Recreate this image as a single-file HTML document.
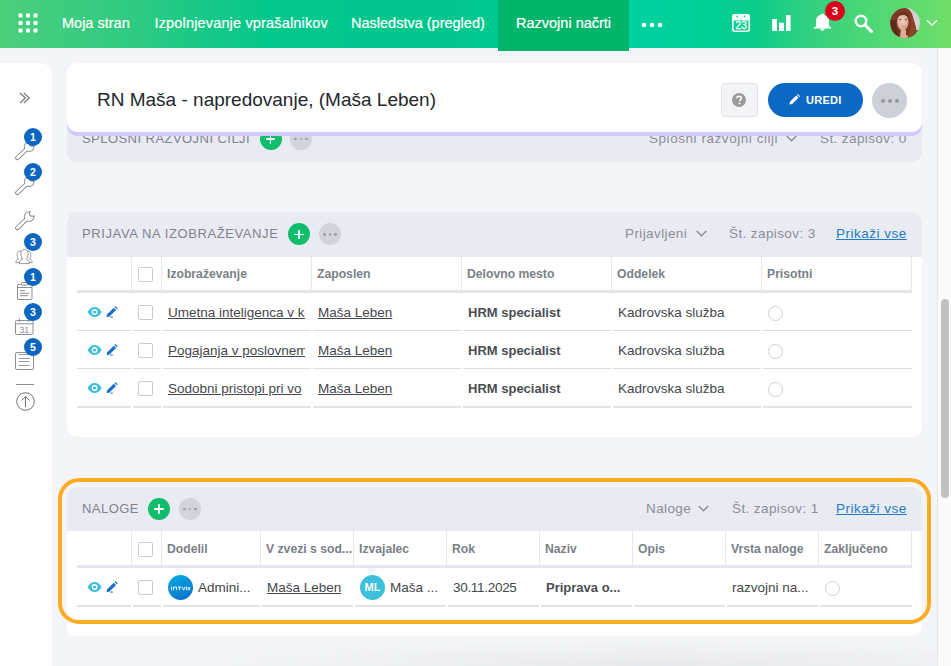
<!DOCTYPE html>
<html><head><meta charset="utf-8">
<style>
*{box-sizing:border-box;margin:0;padding:0}
html,body{width:951px;height:666px;overflow:hidden}
body{background:#f4f5f9;font-family:"Liberation Sans",sans-serif;position:relative;color:#3a3d42}
.abs{position:absolute}
#hdr{left:0;top:0;width:951px;height:48px;background:linear-gradient(90deg,#4ccf7c 0%,#2cca83 15%,#00c78c 29%,#00c68f 50%,#00cd9a 62%,#02d2a0 67%,#00cf95 75%,#10cc8a 80%,#3ad27c 86.5%,#6fdf69 100%)}
.nav{position:absolute;top:14px;color:#fff;font-size:14.5px;white-space:nowrap;line-height:18px;-webkit-text-stroke:0.2px #fff}
#tab{left:498px;top:0;width:131px;height:51px;background:#03b46b}
#side{left:0;top:63px;width:52px;height:620px;background:#fff;border-top-right-radius:12px}
#sb{left:937px;top:48px;width:14px;height:618px;background:#fafafa;border-left:1px solid #e6e6e6}
#thumb{left:941px;top:299px;width:8px;height:199px;background:#c1c1c1;border-radius:4px}
.card{position:absolute;background:#fff;border-radius:10px;overflow:hidden}
.shdr{position:absolute;left:0;top:0;right:0;height:45px;background:#e9ebf3}
.stitle{position:absolute;left:15px;color:#80848c;font-size:13px;letter-spacing:0.45px;white-space:nowrap}
.plus{position:absolute;width:22px;height:22px;border-radius:50%;background:#12bc6d}
.plus:before,.plus:after{content:"";position:absolute;background:#fff;left:50%;top:50%;border-radius:1px}
.plus:before{width:9.5px;height:1.8px;margin:-0.9px 0 0 -4.75px}
.plus:after{width:1.8px;height:9.5px;margin:-4.75px 0 0 -0.9px}
.more{position:absolute;width:22px;height:22px;border-radius:50%;background:#d2d4da}
.more i{position:absolute;top:9.6px;width:2.8px;height:2.8px;border-radius:50%;background:#999ca3}
.rt{position:absolute;color:#8a8e96;font-size:13.5px;letter-spacing:0.4px;white-space:nowrap}
.lnk{position:absolute;color:#1e7bc7;font-size:13.5px;letter-spacing:0.5px;text-decoration:underline;white-space:nowrap}
.th{position:absolute;color:#7b7f87;font-weight:bold;font-size:12.2px;white-space:nowrap}
.vl{position:absolute;width:1px;background:#e7e8ec}
.hl{position:absolute;height:1px;background:#dcdde2}
.cb{position:absolute;width:15px;height:15px;border:1px solid #c9cbd1;border-radius:2px;background:#fff}
.td{position:absolute;font-size:13.5px;color:#44474d;white-space:nowrap}
.u{text-decoration:underline}
.b{font-weight:bold;font-size:13px;color:#4a4d53}
.radio{position:absolute;width:16px;height:16px;border:1px solid #cfd1d5;border-radius:50%}
.badge{position:absolute;left:24px;width:18px;height:18px;border-radius:50%;background:#0b66c2;color:#fff;font-size:10.5px;font-weight:bold;text-align:center;line-height:18px}
</style></head><body>

<div id="hdr" class="abs"></div>
<div id="tab" class="abs"></div>
<!-- grid icon -->
<svg class="abs" style="left:18px;top:13px" width="20" height="20" viewBox="0 0 20 20">
<g fill="#fff">
<rect x="0.5" y="0.5" width="4" height="4" rx="1"/><rect x="8" y="0.5" width="4" height="4" rx="1"/><rect x="15.5" y="0.5" width="4" height="4" rx="1"/>
<rect x="0.5" y="8" width="4" height="4" rx="1"/><rect x="8" y="8" width="4" height="4" rx="1"/><rect x="15.5" y="8" width="4" height="4" rx="1"/>
<rect x="0.5" y="15.5" width="4" height="4" rx="1"/><rect x="8" y="15.5" width="4" height="4" rx="1"/><rect x="15.5" y="15.5" width="4" height="4" rx="1"/>
</g></svg>
<div class="nav" style="left:62px">Moja stran</div>
<div class="nav" style="left:154.5px;letter-spacing:0.16px">Izpolnjevanje vprašalnikov</div>
<div class="nav" style="left:351px">Nasledstva (pregled)</div>
<div class="nav" style="left:516px">Razvojni načrti</div>
<svg class="abs" style="left:641px;top:22.3px" width="22" height="6" viewBox="0 0 22 6"><g fill="#fff"><circle cx="3" cy="3" r="2.3"/><circle cx="11" cy="3" r="2.3"/><circle cx="19" cy="3" r="2.3"/></g></svg>


<!-- header right icons -->
<svg class="abs" style="left:731.5px;top:14px" width="18" height="18" viewBox="0 0 18 18">
<rect x="0.8" y="0.8" width="16.4" height="16.4" rx="1.6" fill="none" stroke="#fff" stroke-width="1.6"/>
<rect x="0.8" y="0.8" width="16.4" height="5.6" rx="1" fill="#fff"/>
<circle cx="5.3" cy="2.3" r="0.9" fill="#05cd92"/><circle cx="12.6" cy="2.3" r="0.9" fill="#05cd92"/>
<text x="9" y="14.7" font-family="Liberation Sans" font-size="10.5" fill="#fff" stroke="#fff" stroke-width="0.25" text-anchor="middle">23</text>
</svg>
<svg class="abs" style="left:772px;top:15px" width="19" height="16" viewBox="0 0 19 16">
<g fill="#fff"><rect x="0.2" y="4" width="4.8" height="12"/><rect x="7" y="7.7" width="5" height="8.3"/><rect x="14" y="0" width="4.6" height="16"/></g>
</svg>
<svg class="abs" style="left:814px;top:13px" width="18" height="19" viewBox="0 0 18 19">
<circle cx="8.5" cy="1.9" r="1.3" fill="#fff"/>
<path d="M8.5 1.6C5 1.6 2.2 4 2.1 7.6L1.9 14H15.1L14.9 7.6C14.8 4 12 1.6 8.5 1.6z" fill="#fff"/>
<rect x="0" y="13.8" width="17" height="1.7" rx="0.5" fill="#fff"/>
<path d="M6.2 15.4a2.3 2.3 0 0 0 4.6 0z" fill="#fff"/>
</svg>
<div class="abs" style="left:825px;top:1px;width:20px;height:20px;border-radius:50%;background:#d8041b;color:#fff;font-weight:bold;font-size:11.5px;text-align:center;line-height:20px">3</div>
<svg class="abs" style="left:854px;top:14px" width="19" height="19" viewBox="0 0 19 19">
<circle cx="7" cy="7" r="5.3" fill="none" stroke="#fff" stroke-width="2.4"/>
<line x1="10.8" y1="10.8" x2="17.5" y2="17.5" stroke="#fff" stroke-width="3" stroke-linecap="round"/>
</svg>
<svg class="abs" style="left:890px;top:8px" width="30" height="30" viewBox="0 0 30 30">
<defs><clipPath id="av"><circle cx="15" cy="15" r="14.9"/></clipPath>
<radialGradient id="skin" cx="0.45" cy="0.4" r="0.6"><stop offset="0" stop-color="#f0cfc2"/><stop offset="1" stop-color="#d9a592"/></radialGradient></defs>
<g clip-path="url(#av)">
<rect width="30" height="30" fill="#d6d2d4"/>
<rect x="0" y="22" width="30" height="8" fill="#8a4a30"/>
<path d="M-1 30V8C1 2 6 -1 13 -0.5C19 0 22 4 23 9C24 14 27 19 26 24C25 27 24 29 23 30z" fill="#7b3a22"/>
<path d="M0 12C1 20 3 26 6 30H10C7 25 6 18 6 12z" fill="#5e2a17"/>
<path d="M17 5C22 9 22 16 20 22C19 26 18 28 17 30H23C25 26 26 20 24 14C23 9 21 6 17 5z" fill="#8b4527"/>
<ellipse cx="12.8" cy="14.2" rx="5.6" ry="8.3" fill="url(#skin)"/>
<path d="M7 10C8 5 11 3.5 15 4C18 4.5 19.5 7 19 10C17 7 13 6 9 8z" fill="#6e321d"/>
<path d="M11 22h5v8h-6z" fill="#dcae9e"/>
<path d="M10 28C12 26 16 26 18 28V30H9z" fill="#e6a7a6"/>
<ellipse cx="10.3" cy="11.6" rx="1.3" ry="0.7" fill="#5d4744"/><ellipse cx="16" cy="11.6" rx="1.2" ry="0.7" fill="#5d4744"/>
<ellipse cx="13.8" cy="18.4" rx="2.2" ry="0.9" fill="#df8f8d"/>
</g></svg>
<svg class="abs" style="left:926px;top:19px" width="12" height="8" viewBox="0 0 12 8"><path d="M1 1.2L6 6.2L11 1.2" fill="none" stroke="#fff" stroke-width="1.3"/></svg>

<div id="side" class="abs"></div>

<svg class="abs" style="left:19px;top:92px" width="12" height="12" viewBox="0 0 12 12"><path d="M1 0.9L6.3 5.9L1 10.9M4.9 0.9L10.2 5.9L4.9 10.9" fill="none" stroke="#80838b" stroke-width="1.4"/></svg>
<svg class="abs" style="left:14px;top:141px" width="21" height="20" viewBox="0 0 21 20"><defs><clipPath id="wc1"><circle cx="15.2" cy="5.6" r="5.3"/></clipPath><mask id="wm1" maskUnits="userSpaceOnUse" x="0" y="0" width="21" height="20"><rect width="21" height="20" fill="#fff"/><circle cx="18.4" cy="2.4" r="2.4" fill="#000"/></mask></defs><g mask="url(#wm1)"><circle cx="15.2" cy="5.6" r="5.3" fill="#8b8e94"/><line x1="15.2" y1="5.6" x2="3.4" y2="16.8" stroke="#8b8e94" stroke-width="4.6" stroke-linecap="round"/><circle cx="15.2" cy="5.6" r="4.3" fill="#fff"/><line x1="15.2" y1="5.6" x2="3.4" y2="16.8" stroke="#fff" stroke-width="2.6" stroke-linecap="round"/><g clip-path="url(#wc1)"><circle cx="18.4" cy="2.4" r="3.4" fill="#8b8e94"/></g></g></svg><div class="badge" style="top:128px">1</div><svg class="abs" style="left:14px;top:176px" width="21" height="20" viewBox="0 0 21 20"><defs><clipPath id="wc2"><circle cx="15.2" cy="5.6" r="5.3"/></clipPath><mask id="wm2" maskUnits="userSpaceOnUse" x="0" y="0" width="21" height="20"><rect width="21" height="20" fill="#fff"/><circle cx="18.4" cy="2.4" r="2.4" fill="#000"/></mask></defs><g mask="url(#wm2)"><circle cx="15.2" cy="5.6" r="5.3" fill="#8b8e94"/><line x1="15.2" y1="5.6" x2="3.4" y2="16.8" stroke="#8b8e94" stroke-width="4.6" stroke-linecap="round"/><circle cx="15.2" cy="5.6" r="4.3" fill="#fff"/><line x1="15.2" y1="5.6" x2="3.4" y2="16.8" stroke="#fff" stroke-width="2.6" stroke-linecap="round"/><g clip-path="url(#wc2)"><circle cx="18.4" cy="2.4" r="3.4" fill="#8b8e94"/></g></g></svg><div class="badge" style="top:163px">2</div><svg class="abs" style="left:14px;top:211px" width="21" height="20" viewBox="0 0 21 20"><defs><clipPath id="wc3"><circle cx="15.2" cy="5.6" r="5.3"/></clipPath><mask id="wm3" maskUnits="userSpaceOnUse" x="0" y="0" width="21" height="20"><rect width="21" height="20" fill="#fff"/><circle cx="18.4" cy="2.4" r="2.4" fill="#000"/></mask></defs><g mask="url(#wm3)"><circle cx="15.2" cy="5.6" r="5.3" fill="#8b8e94"/><line x1="15.2" y1="5.6" x2="3.4" y2="16.8" stroke="#8b8e94" stroke-width="4.6" stroke-linecap="round"/><circle cx="15.2" cy="5.6" r="4.3" fill="#fff"/><line x1="15.2" y1="5.6" x2="3.4" y2="16.8" stroke="#fff" stroke-width="2.6" stroke-linecap="round"/><g clip-path="url(#wc3)"><circle cx="18.4" cy="2.4" r="3.4" fill="#8b8e94"/></g></g></svg>
<svg class="abs" style="left:15px;top:248px" width="19" height="17" viewBox="0 0 19 17"><g fill="#fff" stroke="#8b8e94" stroke-width="0.9" stroke-linejoin="round"><path d="M0.8 14.6c0-2 0.9-2.8 2.6-3.5 0-1-1.3-2-1.3-4.3 0-2.3 1.2-3.8 3-3.8s3 1.5 3 3.8c0 2.3-1.3 3.3-1.3 4.3 1.7.7 2.6 1.5 2.6 3.5z"/><path d="M8.6 14.6c0-2 0.9-2.8 2.6-3.5 0-1-1.3-2-1.3-4.3 0-2.3 1.2-3.8 3-3.8s3 1.5 3 3.8c0 2.3-1.3 3.3-1.3 4.3 1.7.7 2.6 1.5 2.6 3.5z"/><path d="M4.4 15.6c0-2.4 1.1-3.4 3-4.2 0-1.2-1.5-2.5-1.5-5.3 0-2.8 1.4-4.6 3.6-4.6s3.6 1.8 3.6 4.6c0 2.8-1.5 4.1-1.5 5.3 1.9.8 3 1.8 3 4.2z"/></g></svg>
<div class="badge" style="top:233px">3</div>
<svg class="abs" style="left:17px;top:282px" width="16" height="18" viewBox="0 0 16 18"><g fill="none" stroke="#8b8e94" stroke-width="1"><rect x="0.5" y="2.5" width="14.5" height="15" rx="0.6" fill="#fff"/><rect x="4.5" y="0.5" width="6" height="2.5" rx="0.5" fill="#fff"/><path d="M0.5 5.5h14.5M3 8.8h5M3 11.3h9M3 13.7h8"/></g></svg>
<div class="badge" style="top:268px">1</div>
<svg class="abs" style="left:15px;top:318px" width="19" height="17" viewBox="0 0 19 17"><g fill="none" stroke="#8b8e94" stroke-width="1"><rect x="0.5" y="2.5" width="17.5" height="14" rx="1.2" fill="#fff"/><path d="M0.5 5.8h17.5M4.5 0.5v3.5M13.5 0.5v3.5"/></g><text x="9.3" y="14.6" font-family="Liberation Sans" font-size="8.5" fill="#8b8e94" text-anchor="middle">31</text></svg>
<div class="badge" style="top:303px">3</div>
<svg class="abs" style="left:15px;top:352px" width="19" height="18" viewBox="0 0 19 18"><g fill="none" stroke="#8b8e94" stroke-width="1"><rect x="0.5" y="0.5" width="18" height="17" rx="1.5" fill="#fff"/><path d="M3.7 2.5h11M3.7 6.5h11M3.7 9.5h11M3.7 13.5h11" stroke-width="0.9"/></g></svg>
<div class="badge" style="top:338px">5</div>
<div class="abs" style="left:16px;top:384px;width:18px;height:1px;background:#8b8e94"></div>
<svg class="abs" style="left:16px;top:392px" width="19" height="19" viewBox="0 0 19 19"><circle cx="9.5" cy="9.5" r="8.8" fill="none" stroke="#6f7278" stroke-width="1"/><path d="M9.5 15V4.5M5.5 8.5l4-4 4 4" fill="none" stroke="#6f7278" stroke-width="1"/></svg>

<!--MAIN-->
<div class="card" style="left:67px;top:116px;width:855px;height:46px;background:#e9ebf3;border-radius:10px"></div>
<div class="stitle" style="left:82px;top:132px;line-height:14px">SPLOSNI RAZVOJNI CILJI</div>
<div class="plus" style="left:259.5px;top:128px"></div>
<div class="more" style="left:290px;top:128px"><i style="left:4.3px"></i><i style="left:9.6px"></i><i style="left:14.9px"></i></div>
<div class="rt" style="left:649px;top:132px;line-height:14px;letter-spacing:0.55px">Splosni razvojni cilji</div>
<svg class="abs" style="left:786px;top:135px" width="11" height="7" viewBox="0 0 11 7"><path d="M0.7 0.9L5.5 5.7L10.3 0.9" fill="none" stroke="#8a8e96" stroke-width="1.4"/></svg>
<div class="rt" style="left:820px;top:132px;line-height:14px">Št. zapisov: 0</div>
<div class="card" style="left:67px;top:212px;width:855px;height:225px;border-radius:11px"></div>
<div class="abs" style="left:67px;top:212px;width:855px;height:45px;background:#e9ebf3;border-radius:10px 10px 0 0"></div>
<div class="stitle" style="left:82px;top:227px;line-height:14px;letter-spacing:0.6px">PRIJAVA NA IZOBRAŽEVANJE</div>
<div class="plus" style="left:288px;top:223.4px"></div>
<div class="more" style="left:319px;top:223.4px"><i style="left:4.3px"></i><i style="left:9.6px"></i><i style="left:14.9px"></i></div>
<div class="rt" style="left:625px;top:227px;line-height:14px">Prijavljeni</div>
<svg class="abs" style="left:696px;top:230px" width="11" height="7" viewBox="0 0 11 7"><path d="M0.7 0.9L5.5 5.7L10.3 0.9" fill="none" stroke="#8a8e96" stroke-width="1.4"/></svg>
<div class="rt" style="left:729px;top:227px;line-height:14px">Št. zapisov: 3</div>
<div class="lnk" style="left:836px;top:227px;line-height:14px">Prikaži vse</div>
<div class="vl" style="left:131px;top:257px;height:34px"></div>
<div class="vl" style="left:161px;top:257px;height:34px"></div>
<div class="vl" style="left:311px;top:257px;height:34px"></div>
<div class="vl" style="left:461px;top:257px;height:34px"></div>
<div class="vl" style="left:611px;top:257px;height:34px"></div>
<div class="vl" style="left:761px;top:257px;height:34px"></div>
<div class="vl" style="left:911px;top:257px;height:34px"></div>
<div class="abs" style="left:77px;top:290px;width:835px;height:3px;background:#e4e6eb"></div>
<div class="cb" style="left:138px;top:267px"></div>
<div class="th" style="left:167px;top:267px;line-height:14px">Izobraževanje</div>
<div class="th" style="left:317px;top:267px;line-height:14px">Zaposlen</div>
<div class="th" style="left:467px;top:267px;line-height:14px">Delovno mesto</div>
<div class="th" style="left:617px;top:267px;line-height:14px">Oddelek</div>
<div class="th" style="left:767px;top:267px;line-height:14px">Prisotni</div>
<svg class="abs" style="left:87px;top:306px" width="32" height="12" viewBox="0 0 32 12">
<path d="M0.6 6C2.5 2.6 4.8 1 7.6 1s5.1 1.6 7 5c-1.9 3.4-4.2 5-7 5S2.5 9.4 0.6 6z" fill="#3dbfdc"/>
<circle cx="7.6" cy="6" r="2.9" fill="#fff"/><circle cx="7.6" cy="6" r="1.6" fill="#3dbfdc"/>
<path d="M19.6 11.2l0.6-2.9 6.6-6.6 2.3 2.3-6.6 6.6z" fill="#1b6fc8"/>
<path d="M27.5 1l0.9-0.9 2.3 2.3-0.9 0.9z" fill="#1b6fc8"/>
<rect x="23.3" y="10.6" width="2.6" height="1" fill="#1b6fc8"/>
</svg>
<div class="cb" style="left:138px;top:305px"></div>
<div class="td u" style="left:168px;top:305px;width:137px;overflow:hidden;line-height:16px">Umetna inteligenca v ko</div>
<div class="td u" style="left:318px;top:305px;line-height:16px">Maša Leben</div>
<div class="td b" style="left:468px;top:305px;line-height:16px">HRM specialist</div>
<div class="td" style="left:618px;top:305px;line-height:16px">Kadrovska služba</div>
<div class="radio" style="left:768px;top:306px;width:15px;height:15px"></div>
<div class="hl" style="left:77px;top:330px;width:54px"></div>
<div class="hl" style="left:133px;top:330px;width:28px"></div>
<div class="hl" style="left:163px;top:330px;width:148px"></div>
<div class="hl" style="left:313px;top:330px;width:148px"></div>
<div class="hl" style="left:463px;top:330px;width:148px"></div>
<div class="hl" style="left:613px;top:330px;width:148px"></div>
<div class="hl" style="left:763px;top:330px;width:149px"></div>
<svg class="abs" style="left:87px;top:344px" width="32" height="12" viewBox="0 0 32 12">
<path d="M0.6 6C2.5 2.6 4.8 1 7.6 1s5.1 1.6 7 5c-1.9 3.4-4.2 5-7 5S2.5 9.4 0.6 6z" fill="#3dbfdc"/>
<circle cx="7.6" cy="6" r="2.9" fill="#fff"/><circle cx="7.6" cy="6" r="1.6" fill="#3dbfdc"/>
<path d="M19.6 11.2l0.6-2.9 6.6-6.6 2.3 2.3-6.6 6.6z" fill="#1b6fc8"/>
<path d="M27.5 1l0.9-0.9 2.3 2.3-0.9 0.9z" fill="#1b6fc8"/>
<rect x="23.3" y="10.6" width="2.6" height="1" fill="#1b6fc8"/>
</svg>
<div class="cb" style="left:138px;top:343px"></div>
<div class="td u" style="left:168px;top:343px;width:137px;overflow:hidden;line-height:16px">Pogajanja v poslovnem s</div>
<div class="td u" style="left:318px;top:343px;line-height:16px">Maša Leben</div>
<div class="td b" style="left:468px;top:343px;line-height:16px">HRM specialist</div>
<div class="td" style="left:618px;top:343px;line-height:16px">Kadrovska služba</div>
<div class="radio" style="left:768px;top:344px;width:15px;height:15px"></div>
<div class="hl" style="left:77px;top:368px;width:54px"></div>
<div class="hl" style="left:133px;top:368px;width:28px"></div>
<div class="hl" style="left:163px;top:368px;width:148px"></div>
<div class="hl" style="left:313px;top:368px;width:148px"></div>
<div class="hl" style="left:463px;top:368px;width:148px"></div>
<div class="hl" style="left:613px;top:368px;width:148px"></div>
<div class="hl" style="left:763px;top:368px;width:149px"></div>
<svg class="abs" style="left:87px;top:382px" width="32" height="12" viewBox="0 0 32 12">
<path d="M0.6 6C2.5 2.6 4.8 1 7.6 1s5.1 1.6 7 5c-1.9 3.4-4.2 5-7 5S2.5 9.4 0.6 6z" fill="#3dbfdc"/>
<circle cx="7.6" cy="6" r="2.9" fill="#fff"/><circle cx="7.6" cy="6" r="1.6" fill="#3dbfdc"/>
<path d="M19.6 11.2l0.6-2.9 6.6-6.6 2.3 2.3-6.6 6.6z" fill="#1b6fc8"/>
<path d="M27.5 1l0.9-0.9 2.3 2.3-0.9 0.9z" fill="#1b6fc8"/>
<rect x="23.3" y="10.6" width="2.6" height="1" fill="#1b6fc8"/>
</svg>
<div class="cb" style="left:138px;top:381px"></div>
<div class="td u" style="left:168px;top:381px;width:137px;overflow:hidden;line-height:16px">Sodobni pristopi pri vo</div>
<div class="td u" style="left:318px;top:381px;line-height:16px">Maša Leben</div>
<div class="td b" style="left:468px;top:381px;line-height:16px">HRM specialist</div>
<div class="td" style="left:618px;top:381px;line-height:16px">Kadrovska služba</div>
<div class="radio" style="left:768px;top:382px;width:15px;height:15px"></div>
<div class="hl" style="left:77px;top:406px;width:54px;height:2px;background:#e2e3e8"></div>
<div class="hl" style="left:133px;top:406px;width:28px;height:2px;background:#e2e3e8"></div>
<div class="hl" style="left:163px;top:406px;width:148px;height:2px;background:#e2e3e8"></div>
<div class="hl" style="left:313px;top:406px;width:148px;height:2px;background:#e2e3e8"></div>
<div class="hl" style="left:463px;top:406px;width:148px;height:2px;background:#e2e3e8"></div>
<div class="hl" style="left:613px;top:406px;width:148px;height:2px;background:#e2e3e8"></div>
<div class="hl" style="left:763px;top:406px;width:149px;height:2px;background:#e2e3e8"></div>
<div class="card" style="left:67px;top:487px;width:855px;height:149px"></div>
<div class="abs" style="left:67px;top:487px;width:855px;height:44px;background:#e9ebf3;border-radius:10px 10px 0 0"></div>
<div class="stitle" style="left:82px;top:502px;line-height:14px">NALOGE</div>
<div class="plus" style="left:148px;top:498px"></div>
<div class="more" style="left:179px;top:498px"><i style="left:4.3px"></i><i style="left:9.6px"></i><i style="left:14.9px"></i></div>
<div class="rt" style="left:646px;top:502px;line-height:14px">Naloge</div>
<svg class="abs" style="left:698px;top:505px" width="11" height="7" viewBox="0 0 11 7"><path d="M0.7 0.9L5.5 5.7L10.3 0.9" fill="none" stroke="#8a8e96" stroke-width="1.4"/></svg>
<div class="rt" style="left:732px;top:502px;line-height:14px">Št. zapisov: 1</div>
<div class="lnk" style="left:836px;top:502px;line-height:14px">Prikaži vse</div>
<div class="vl" style="left:131px;top:531px;height:35px"></div>
<div class="vl" style="left:161px;top:531px;height:35px"></div>
<div class="vl" style="left:260px;top:531px;height:35px"></div>
<div class="vl" style="left:353px;top:531px;height:35px"></div>
<div class="vl" style="left:446px;top:531px;height:35px"></div>
<div class="vl" style="left:539px;top:531px;height:35px"></div>
<div class="vl" style="left:632px;top:531px;height:35px"></div>
<div class="vl" style="left:725px;top:531px;height:35px"></div>
<div class="vl" style="left:818px;top:531px;height:35px"></div>
<div class="vl" style="left:911px;top:531px;height:35px"></div>
<div class="abs" style="left:77px;top:565px;width:835px;height:3px;background:#e4e6eb"></div>
<div class="cb" style="left:138px;top:542px"></div>
<div class="th" style="left:167px;top:542px;line-height:14px">Dodelil</div>
<div class="th" style="left:266px;top:542px;line-height:14px">V zvezi s sod...</div>
<div class="th" style="left:359px;top:542px;line-height:14px">Izvajalec</div>
<div class="th" style="left:452px;top:542px;line-height:14px">Rok</div>
<div class="th" style="left:545px;top:542px;line-height:14px">Naziv</div>
<div class="th" style="left:638px;top:542px;line-height:14px">Opis</div>
<div class="th" style="left:731px;top:542px;line-height:14px">Vrsta naloge</div>
<div class="th" style="left:824px;top:542px;line-height:14px">Zaključeno</div>
<svg class="abs" style="left:87px;top:581px" width="32" height="12" viewBox="0 0 32 12">
<path d="M0.6 6C2.5 2.6 4.8 1 7.6 1s5.1 1.6 7 5c-1.9 3.4-4.2 5-7 5S2.5 9.4 0.6 6z" fill="#3dbfdc"/>
<circle cx="7.6" cy="6" r="2.9" fill="#fff"/><circle cx="7.6" cy="6" r="1.6" fill="#3dbfdc"/>
<path d="M19.6 11.2l0.6-2.9 6.6-6.6 2.3 2.3-6.6 6.6z" fill="#1b6fc8"/>
<path d="M27.5 1l0.9-0.9 2.3 2.3-0.9 0.9z" fill="#1b6fc8"/>
<rect x="23.3" y="10.6" width="2.6" height="1" fill="#1b6fc8"/>
</svg>
<div class="cb" style="left:138px;top:580px"></div>
<svg class="abs" style="left:168px;top:574.5px" width="25" height="25" viewBox="0 0 25 25"><defs><linearGradient id="ig" x1="0.2" y1="0" x2="0.7" y2="1"><stop offset="0" stop-color="#0aa9e6"/><stop offset="1" stop-color="#0a70c9"/></linearGradient></defs><circle cx="12.5" cy="12.5" r="12.5" fill="url(#ig)"/><g fill="none" stroke="#fff" stroke-width="0.95"><path d="M3.6 11.6V15.2M5.6 15.2V12.1H8.6V15.2M9.9 12.1H13.1M11.5 12.1V15.2M14 11.9L15.5 15.2L17 11.9M18.4 11.6V15.2M19.7 11.9L22.2 15.2M22.2 11.9L19.7 15.2"/></g></svg>
<div class="td" style="left:198px;top:580px;line-height:16px">Admini...</div>
<div class="td u" style="left:267px;top:580px;line-height:16px">Maša Leben</div>
<div class="abs" style="left:360px;top:574.5px;width:25px;height:25px;border-radius:50%;background:#3dc0dc;color:#fff;font-weight:bold;font-size:11px;text-align:center;line-height:25px">ML</div>
<div class="td" style="left:390px;top:580px;line-height:16px">Maša ...</div>
<div class="td" style="left:453px;top:580px;line-height:16px;letter-spacing:-0.3px">30.11.2025</div>
<div class="td b" style="left:546px;top:580px;line-height:16px">Priprava o...</div>
<div class="td" style="left:732px;top:580px;line-height:16px">razvojni na...</div>
<div class="radio" style="left:825px;top:581px;width:15px;height:15px"></div>
<div class="hl" style="left:77px;top:605px;width:54px;height:2px;background:#e2e3e8"></div>
<div class="hl" style="left:133px;top:605px;width:28px;height:2px;background:#e2e3e8"></div>
<div class="hl" style="left:163px;top:605px;width:97px;height:2px;background:#e2e3e8"></div>
<div class="hl" style="left:262px;top:605px;width:91px;height:2px;background:#e2e3e8"></div>
<div class="hl" style="left:355px;top:605px;width:91px;height:2px;background:#e2e3e8"></div>
<div class="hl" style="left:448px;top:605px;width:91px;height:2px;background:#e2e3e8"></div>
<div class="hl" style="left:541px;top:605px;width:91px;height:2px;background:#e2e3e8"></div>
<div class="hl" style="left:634px;top:605px;width:91px;height:2px;background:#e2e3e8"></div>
<div class="hl" style="left:727px;top:605px;width:91px;height:2px;background:#e2e3e8"></div>
<div class="hl" style="left:820px;top:605px;width:92px;height:2px;background:#e2e3e8"></div>
<div class="abs" style="left:58px;top:478px;width:873px;height:146px;border:4px solid #fcab22;border-radius:21px"></div>
<div class="card" style="left:67px;top:63px;width:855px;height:69px;box-shadow:0 4px 0 #d3cbfa;overflow:visible"></div>
<div class="abs" style="left:97px;top:89px;font-size:19px;color:#24272c;line-height:22px;white-space:nowrap">RN Maša - napredovanje, (Maša Leben)</div>
<div class="abs" style="left:721px;top:83px;width:37px;height:34px;background:#f3f4f8;border:1px solid #e2e3e8;border-radius:4px"></div>
<svg class="abs" style="left:732px;top:93px" width="14" height="14" viewBox="0 0 14 14"><circle cx="7" cy="7" r="7" fill="#9b9b9b"/><path d="M4.9 5.3c0-1.3 1-2.1 2.2-2.1s2.2.8 2.2 1.9c0 1.4-1.6 1.5-1.6 2.9" fill="none" stroke="#fff" stroke-width="1.6"/><circle cx="7.6" cy="10.4" r="0.95" fill="#fff"/></svg>
<div class="abs" style="left:768px;top:83px;width:95px;height:34px;background:#0b69c3;border-radius:17px"></div>
<svg class="abs" style="left:789px;top:94px" width="11" height="11" viewBox="0 0 11 11"><path d="M0.4 10.6l0.6-2.8 6.3-6.3 2.2 2.2-6.3 6.3z" fill="#fff"/><path d="M8 0.8l0.8-0.8 2.2 2.2-0.8 0.8z" fill="#fff"/></svg>
<div class="abs" style="left:806px;top:94px;color:#fff;font-weight:bold;font-size:11px;letter-spacing:0.25px;line-height:12px">UREDI</div>
<div class="more" style="left:872px;top:83px;width:35px;height:35px;background:#cdd0d6"><i style="left:8.5px;top:15.5px;width:4px;height:4px;background:#96999f"></i><i style="left:15.5px;top:15.5px;width:4px;height:4px;background:#96999f"></i><i style="left:22.5px;top:15.5px;width:4px;height:4px;background:#96999f"></i></div>
<!--/MAIN-->
<div class="abs" style="left:52px;top:636px;width:885px;height:30px;background:radial-gradient(ellipse 480px 26px at 600px 100%,rgba(20,20,40,0.055),rgba(20,20,40,0))"></div>
<div id="sb" class="abs"></div>
<div id="thumb" class="abs"></div>

</body></html>
